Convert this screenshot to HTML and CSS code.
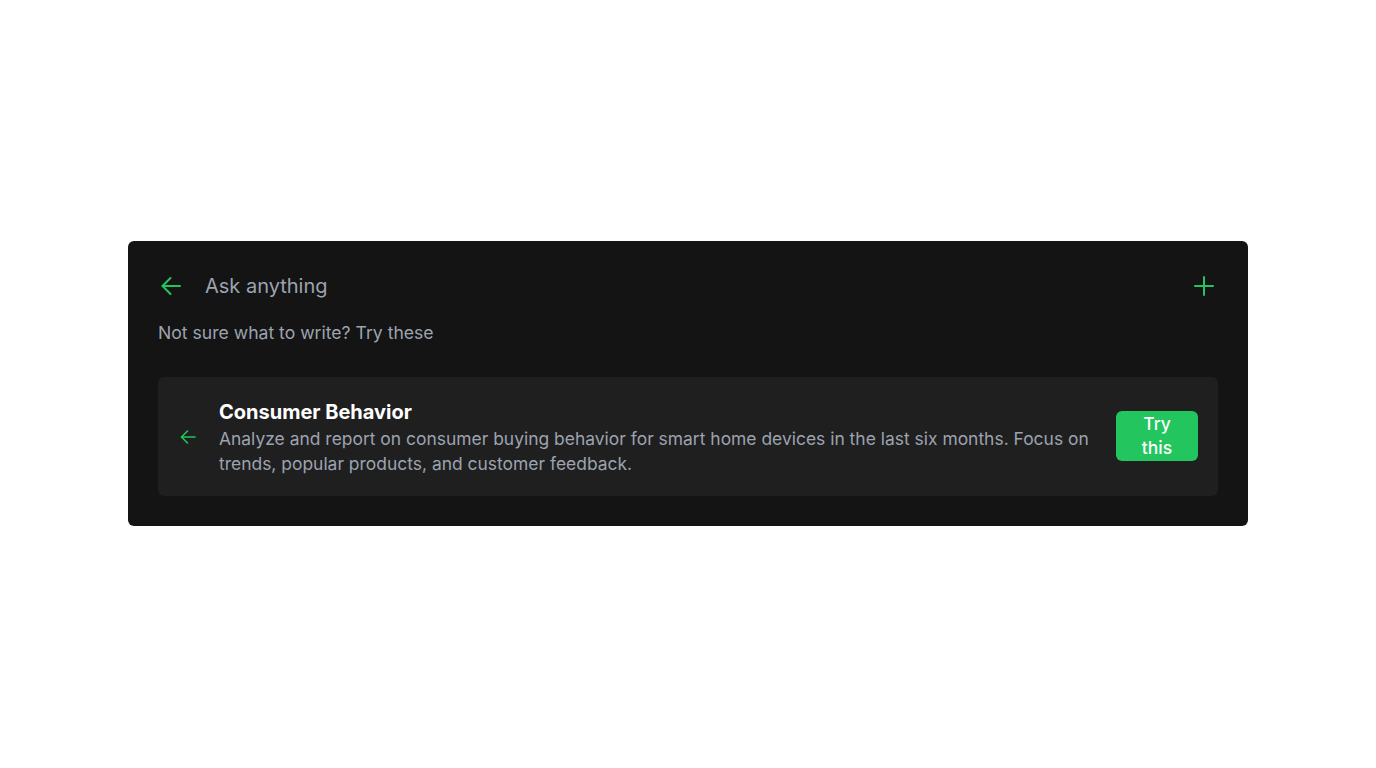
FILE: index.html
```html
<!DOCTYPE html>
<html lang="en">
<head>
<meta charset="utf-8">
<title>Ask anything</title>
<link rel="stylesheet" href="styles.css">
</head>
<body>
<div class="page">
  <section class="panel">
    <header class="panel-head">
      <button class="icon-btn back" aria-label="Back">
        <svg width="20" height="20" viewBox="0 0 20 20" fill="none" stroke="currentColor" stroke-width="2" stroke-linecap="round" stroke-linejoin="round"><path d="M19 10H1.5"/><path d="M9.5 2L1.5 10l8 8"/></svg>
      </button>
      <span class="head-title">Ask anything</span>
      <button class="icon-btn plus" aria-label="New">
        <svg width="20" height="20" viewBox="0 0 20 20" fill="none" stroke="currentColor" stroke-width="2" stroke-linecap="round" stroke-linejoin="round"><path d="M10 1v18"/><path d="M1 10h18"/></svg>
      </button>
    </header>
    <p class="hint">Not sure what to write? Try these</p>
    <div class="card">
      <span class="card-icon">
        <svg width="16" height="16" viewBox="0 0 16 16" fill="none" stroke="currentColor" stroke-width="1.6" stroke-linecap="round" stroke-linejoin="round"><path d="M15 8H1.5"/><path d="M7.5 2L1.5 8l6 6"/></svg>
      </span>
      <div class="card-body">
        <h3 class="card-title">Consumer Behavior</h3>
        <p class="card-desc">Analyze and report on consumer buying behavior for smart home devices in the last six months. Focus on trends, popular products, and customer feedback.</p>
      </div>
      <button class="try-btn">Try this</button>
    </div>
  </section>
</div>
</body>
</html>
```
FILE: styles.css
```css
* { box-sizing: border-box; }
html, body { margin: 0; padding: 0; background: #ffffff; }
body { font-family: Inter, "Noto Sans", sans-serif; }
.page {
  min-height: 768px;
  display: flex;
  align-items: center;
  justify-content: center;
  padding: 0 128px 1px;
}
.panel {
  width: 1120px;
  background: #141414;
  border-radius: 6px;
  padding: 30px;
}
.panel-head {
  display: flex;
  align-items: center;
  height: 30px;
}
.icon-btn {
  background: none;
  border: 0;
  padding: 0;
  color: #22c55e;
  display: flex;
  align-items: center;
  cursor: pointer;
}
.back { margin-left: 3px; }
.head-title {
  flex: 1;
  margin-left: 24px;
  font-size: 20px;
  color: #9ca3af;
}
.plus { margin-right: 4px; }
.hint {
  margin: 20px 0 0;
  font-size: 17.6px;
  line-height: 24px;
  color: #9ca3af;
}
.card {
  margin-top: 32px;
  background: #1f1f1f;
  border-radius: 6px;
  padding: 21px 20px 20px 22px;
  display: flex;
  align-items: center;
}
.card-icon {
  color: #22c55e;
  display: flex;
  margin-right: 23px;
}
.card-body { flex: 1; min-width: 0; }
.card-title {
  margin: 0;
  font-size: 20px;
  line-height: 28px;
  font-weight: 700;
  color: #ffffff;
}
.card-desc {
  margin: 0;
  font-size: 17.45px;
  line-height: 25px;
  color: #9ca3af;
}
.try-btn {
  flex: none;
  align-self: center;
  width: 82px;
  margin-left: 24px;
  margin-top: -2px;
  background: #22c55e;
  color: #ffffff;
  border: 0;
  border-radius: 6px;
  padding: 1px 14px;
  font-family: inherit;
  font-size: 17.5px;
  line-height: 24px;
  font-weight: 500;
  cursor: pointer;
}
```
